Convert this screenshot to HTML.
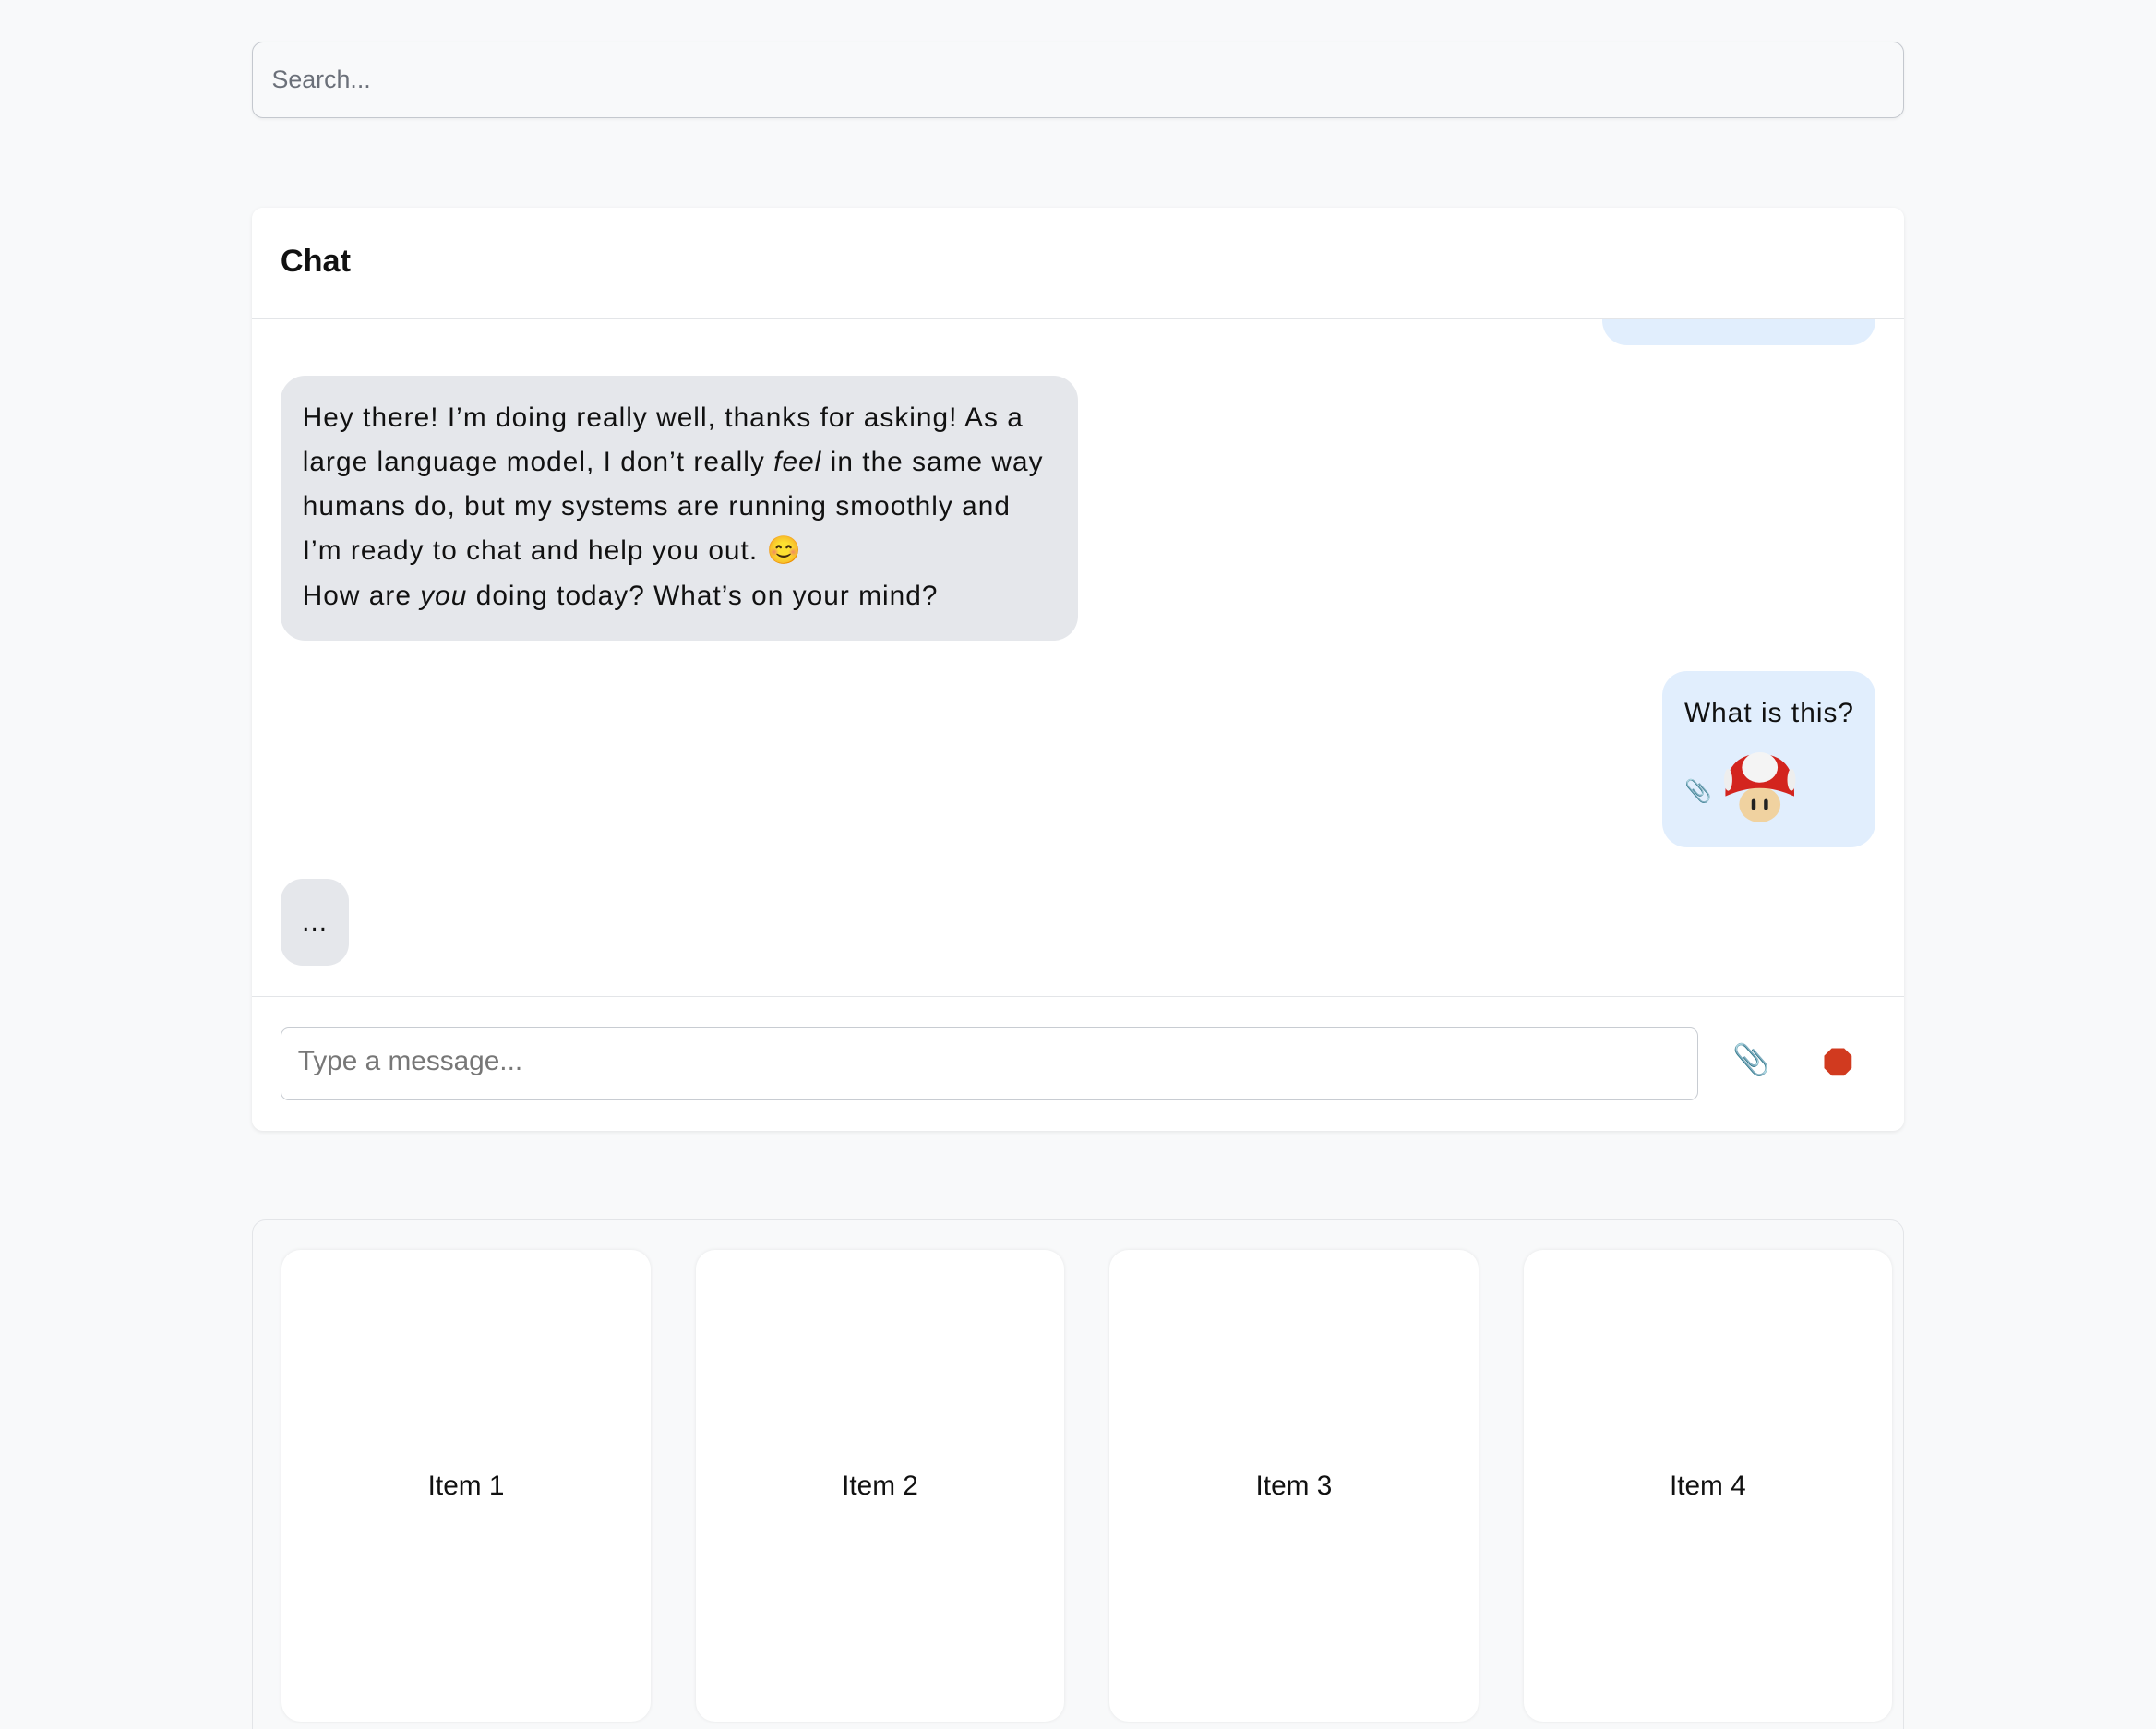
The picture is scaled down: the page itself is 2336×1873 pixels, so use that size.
<!DOCTYPE html>
<html><head><meta charset="utf-8"><style>
html,body{margin:0;padding:0;}
body{width:2336px;height:1872px;overflow:hidden;background:#f8f9fa;font-family:"Liberation Sans",Arial,sans-serif;}
#z{zoom:1.4898;position:relative;width:1568px;height:1257px;overflow:hidden;}
.a{position:absolute;box-sizing:border-box;}
.search{left:183px;top:30px;width:1202px;height:56px;border:1px solid #c4c8ce;border-radius:8px;background:#f8f9fa;font-size:18px;color:#6b7079;padding:17px 14px;box-shadow:0 1px 2px rgba(0,0,0,.05);}
.card{left:183px;top:151px;width:1202px;height:671px;background:#fff;border-radius:8px;box-shadow:0 1px 3px rgba(0,0,0,.08);overflow:hidden;}
.bub{font-size:20px;line-height:32.3px;color:#111;letter-spacing:0.7px;}
.grid{left:183px;top:887px;width:1202px;height:400px;border:1px solid #e3e5e8;border-radius:10px;background:#f8f9fa;}
.it{top:909px;width:268px;height:343px;background:#fff;border-radius:14px;box-shadow:0 0 3px rgba(0,0,0,.08);font-size:20px;color:#111;text-align:center;line-height:343px;}
</style></head><body><div id="z">
<div class="a search">Search...</div>
<div class="a card">
  <div class="a" style="left:982px;top:60px;width:199px;height:40px;background:#e1eefd;border-radius:18px;"></div>
  <div class="a" style="left:0;top:0;width:1202px;height:80px;background:#fff;"></div>
  <div class="a" style="left:21px;top:26px;font-size:23px;font-weight:bold;color:#111;">Chat</div>
  <div class="a" style="left:0;top:80px;width:1202px;height:1px;background:#e3e5e8;"></div>
  <div class="a bub" style="left:21px;top:122px;width:580px;height:193px;background:#e5e7eb;border-radius:18px;padding:15px 16px 15px 16px;">Hey there! I’m doing really well, thanks for asking! As a large language model, I don’t really <i>feel</i> in the same way humans do, but my systems are running smoothly and I’m ready to chat and help you out. 😊<br>How are <i>you</i> doing today? What’s on your mind?</div>
  <div class="a bub" style="left:1026px;top:337px;width:155px;height:128px;background:#e1eefd;border-radius:18px;padding:15px 10px 15px 16px;white-space:nowrap;">What is this?
    <div class="a" style="left:16px;top:72px;font-size:16px;color:#8aa3c0;">📎</div>
    <svg class="a" style="left:43px;top:57px" width="56" height="56" viewBox="0 0 56 56"><ellipse cx="28" cy="40" rx="15" ry="13" fill="#f0d2a0"/><path d="M3 34 Q2 4 28 3 Q54 4 53 34 Q40 28 28 28 Q16 28 3 34Z" fill="#d3241e"/><ellipse cx="28" cy="13" rx="13" ry="11" fill="#f4f4f4"/><ellipse cx="5" cy="22" rx="3" ry="8" fill="#eee"/><ellipse cx="51" cy="22" rx="3" ry="8" fill="#eee"/><rect x="22" y="36" width="3" height="8" rx="1.5" fill="#222"/><rect x="31" y="36" width="3" height="8" rx="1.5" fill="#222"/></svg>
  </div>
  <div class="a bub" style="left:21px;top:488px;width:50px;height:63px;background:#e5e7eb;border-radius:16px;text-align:center;line-height:63px;">...</div>
  <div class="a" style="left:0;top:573px;width:1202px;height:1px;background:#e3e5e8;"></div>
  <div class="a" style="left:21px;top:596px;width:1031px;height:53px;border:1px solid #c8ccd2;border-radius:6px;font-size:20px;color:#777;padding:13px 12px;">Type a message...</div>
  <div class="a" style="left:1077px;top:607px;font-size:22px;color:#8aa3c0;">📎</div>
  <svg class="a" style="left:1143px;top:610px" width="22" height="22" viewBox="0 0 22 22"><polygon points="6.5,1 15.5,1 21,6.5 21,15.5 15.5,21 6.5,21 1,15.5 1,6.5" fill="#d13a1f"/></svg>
</div>
<div class="a grid"></div>
<div class="a it" style="left:205px;">Item 1</div>
<div class="a it" style="left:506px;">Item 2</div>
<div class="a it" style="left:807px;">Item 3</div>
<div class="a it" style="left:1108px;">Item 4</div>
</div></body></html>
